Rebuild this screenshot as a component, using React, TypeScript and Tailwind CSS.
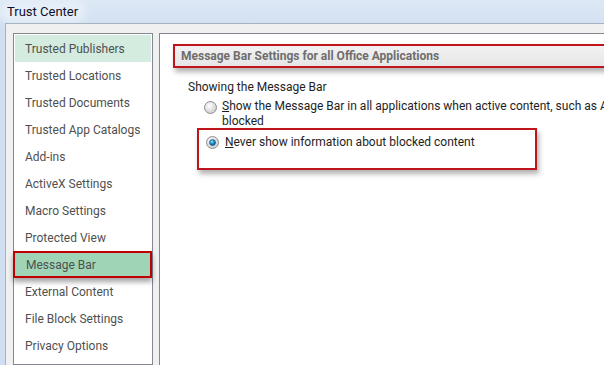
import React from "react";

const items = [
  "Trusted Publishers",
  "Trusted Locations",
  "Trusted Documents",
  "Trusted App Catalogs",
  "Add-ins",
  "ActiveX Settings",
  "Macro Settings",
  "Protected View",
  "Message Bar",
  "External Content",
  "File Block Settings",
  "Privacy Options",
];

function Radio({ checked }: { checked?: boolean }) {
  return (
    <svg width="13" height="13" viewBox="0 0 13 13" className="shrink-0">
      <defs>
        <radialGradient id={checked ? "rg1" : "rg0"} cx="0.4" cy="0.35" r="0.7">
          <stop offset="0" stopColor="#ffffff" />
          <stop offset="1" stopColor="#c9c9c9" />
        </radialGradient>
        <radialGradient id="dot" cx="0.4" cy="0.35" r="0.7">
          <stop offset="0" stopColor="#9fe0ff" />
          <stop offset="0.5" stopColor="#1c8fd0" />
          <stop offset="1" stopColor="#0b4f86" />
        </radialGradient>
      </defs>
      <circle cx="6.5" cy="6.5" r="6" fill={`url(#${checked ? "rg1" : "rg0"})`} stroke="#8f8f8f" strokeWidth="1" />
      {checked && <circle cx="6.5" cy="6.5" r="3" fill="url(#dot)" stroke="#1a3f66" strokeWidth="0.6" />}
    </svg>
  );
}

export default function App() {
  return (
    <div
      className="w-[604px] h-[365px] overflow-hidden flex flex-col bg-[#cfdff1]"
      style={{ fontFamily: 'Roboto, "Noto Sans", sans-serif' }}
    >
      <div className="h-[23px] shrink-0 flex items-center pl-[5px] bg-gradient-to-b from-[#dde8f5] to-[#d3e1f1]">
        <span className="text-[13px] leading-none text-[#10102a] px-[2px] rounded-full bg-[#e6eef8] shadow-[0_0_8px_6px_#e6eef8]">
          Trust Center
        </span>
      </div>
      <div className="flex-1 flex pl-[5px] min-h-0">
        <div className="flex-1 flex border-l border-t border-[#a5b3c2] bg-[#f0f0f0] pl-[7px] pt-[9px] min-h-0">
          <div className="w-[140px] shrink-0 bg-white border border-[#828790] pt-px px-px">
            {items.map((it, i) => {
              const first = i === 0;
              const sel = it === "Message Bar";
              return (
                <div
                  key={it}
                  className={
                    "h-[27px] flex items-center text-[12px] text-[#505050] " +
                    (first ? "bg-[#d3ecdf] pl-[10px] " : "") +
                    (sel
                      ? "bg-[#9fd5b6] border-2 border-[#c00000] -ml-[2px] -mr-px pl-[11px] text-[#5e6b63] shadow-[0_4px_5px_rgba(0,0,0,0.35)] relative "
                      : !first
                      ? "pl-[10px] "
                      : "")
                  }
                >
                  {it}
                </div>
              );
            })}
          </div>
          <div className="w-[6px] shrink-0" />
          <div className="flex-1 min-w-0 overflow-hidden bg-white border-l border-t border-[#828790] pl-[13px] pt-[10px]">
            <div className="h-[24px] mr-[5px] flex items-center pl-[6px] border-2 border-[#c0141c] bg-gradient-to-b from-[#f2f2f2] to-[#e6e6e6] shadow-[2px_4px_5px_rgba(0,0,0,0.3)]">
              <span className="text-[12px] font-bold text-[#6e6e6e]">
                Message Bar Settings for all Office Applications
              </span>
            </div>
            <div className="pl-[15px] pt-[10px] text-[12px] text-[#1e1e1e]">
              <div className="h-[18px] flex items-center">Showing the Message Bar</div>
              <div className="flex pl-[16px] pt-[3px]">
                <div className="pt-[2px]">
                  <Radio />
                </div>
                <div className="pl-[5px] leading-[15px] whitespace-nowrap">
                  <div>
                    <span className="underline">S</span>how the Message Bar in all applications when active content, such as ActiveX
                  </div>
                  <div>blocked</div>
                </div>
              </div>
              <div className="mt-[-1px] ml-[9px] w-[340px] h-[42px] border-2 border-[#c0141c] shadow-[2px_4px_5px_rgba(0,0,0,0.3)] pt-[6px] pl-[7px] flex items-start">
                <Radio checked />
                <span className="pl-[6px] leading-[13px]">
                  <span className="underline">N</span>ever show information about blocked content
                </span>
              </div>
            </div>
          </div>
        </div>
      </div>
    </div>
  );
}
